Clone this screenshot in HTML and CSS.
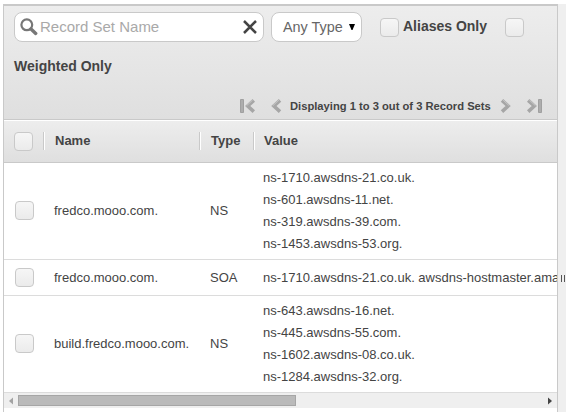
FILE: index.html
```html
<!DOCTYPE html>
<html lang="en">
<head>
<meta charset="utf-8">
<title>Record Sets</title>
<link rel="stylesheet" href="styles.css">
</head>
<body>
<div class="layout">
  <main class="panel">
    <header class="toolbar">
      <div class="filters">
        <div class="search">
          <svg class="search-icon" width="18" height="18" viewBox="0 0 18 18"><circle cx="6.8" cy="6.8" r="5.4" fill="none" stroke="#777" stroke-width="2.2"/><path d="M11 11l4.7 4.4" stroke="#777" stroke-width="3.4" stroke-linecap="round"/></svg>
          <span class="placeholder">Record Set Name</span>
          <svg class="clear" width="14" height="14" viewBox="0 0 14 14"><path d="M1 1l12 12M13 1L1 13" stroke="#444" stroke-width="2.5"/></svg>
        </div>
        <div class="select"><span>Any Type</span><svg width="6" height="6" viewBox="0 0 6 6"><path d="M0 0h6L3.5 6h-1z" fill="#000"/></svg></div>
        <span class="check first"></span>
        <span class="label">Aliases Only</span>
        <span class="check second"></span>
      </div>
      <div class="label weighted">Weighted Only</div>
      <nav class="pager">
        <svg width="16" height="14" viewBox="0 0 16 14"><path d="M.5.5h3v13h-3z" fill="#adadad" stroke="#a0a0a0"/><path d="M13.8 1.4L7.7 7l6.1 5.6" fill="none" stroke="#a6a6a6" stroke-width="3.6"/><path d="M12.7 1L6.5 6.8" stroke="#c8c8c8"/></svg>
        <svg class="prev" width="11" height="14" viewBox="0 0 11 14"><path d="M9 1.4L2.9 7L9 12.6" fill="none" stroke="#a6a6a6" stroke-width="3.6"/><path d="M7.9 1L1.7 6.8" stroke="#c8c8c8"/></svg>
        <span class="count">Displaying 1 to 3 out of 3 Record Sets</span>
        <svg class="next" width="11" height="14" viewBox="0 0 11 14"><path d="M2 1.4L8.1 7L2 12.6" fill="none" stroke="#a6a6a6" stroke-width="3.6"/><path d="M3.1 1L9.3 6.8" stroke="#c8c8c8"/></svg>
        <svg class="last" width="16" height="14" viewBox="0 0 16 14"><path d="M2.2 1.4L8.3 7l-6.1 5.6" fill="none" stroke="#a6a6a6" stroke-width="3.6"/><path d="M3.3 1L9.5 6.8" stroke="#c8c8c8"/><path d="M12.5.5h3v13h-3z" fill="#adadad" stroke="#a0a0a0"/></svg>
      </nav>
    </header>
    <div class="table">
      <div class="row head">
        <div class="cell"><span class="check"></span></div>
        <div class="cell split">Name</div>
        <div class="cell split">Type</div>
        <div class="cell split">Value</div>
      </div>
      <div class="row tall">
        <div class="cell"><span class="check"></span></div>
        <div class="cell">fredco.mooo.com.</div>
        <div class="cell">NS</div>
        <div class="cell value">ns-1710.awsdns-21.co.uk.<br>ns-601.awsdns-11.net.<br>ns-319.awsdns-39.com.<br>ns-1453.awsdns-53.org.</div>
      </div>
      <div class="row short">
        <div class="cell"><span class="check"></span></div>
        <div class="cell">fredco.mooo.com.</div>
        <div class="cell">SOA</div>
        <div class="cell value">ns-1710.awsdns-21.co.uk. awsdns-hostmaster.ama</div>
      </div>
      <div class="row tall">
        <div class="cell"><span class="check"></span></div>
        <div class="cell">build.fredco.mooo.com.</div>
        <div class="cell">NS</div>
        <div class="cell value">ns-643.awsdns-16.net.<br>ns-445.awsdns-55.com.<br>ns-1602.awsdns-08.co.uk.<br>ns-1284.awsdns-32.org.</div>
      </div>
    </div>
    <div class="scrollbar">
      <svg width="4" height="8" viewBox="0 0 4 8"><path d="M4 .5v7L0 4z" fill="#a3a3a3"/></svg>
      <div class="thumb"></div>
      <svg class="right" width="4" height="8" viewBox="0 0 4 8"><path d="M0 .5v7L4 4z" fill="#444"/></svg>
    </div>
  </main>
  <div class="splitter"><span class="grip"></span></div>
</div>
</body>
</html>
```

FILE: styles.css
```css
* { box-sizing: border-box; }
body {
  margin: 0;
  background: #fff;
  color: #444;
  font: 13px/22px "Liberation Sans", Arial, sans-serif;
  overflow: hidden;
}
svg { display: block; flex: none; }
.layout { display: flex; height: 412px; padding: 4px 0 0 3px; }
.panel {
  flex: none;
  width: 555px;
  border: solid #c9c9c9;
  border-width: 2px 1px 0;
  overflow: hidden;
}
.toolbar {
  height: 114px;
  padding: 6px 10px 0;
  border-bottom: 1px solid #c9c9c9;
  background: linear-gradient(#ededed, #dfdfdf);
}
.filters { display: flex; height: 30px; }
.search, .select {
  display: flex;
  align-items: center;
  height: 30px;
  border: 1px solid #c9c9c9;
  border-radius: 8px;
  background: #fff;
}
.search { width: 250px; padding: 0 6px 0 5px; }
.search-icon { margin-top: -1px; }
.placeholder { margin-left: 2px; font-size: 15px; color: #a9a9a9; }
.clear { margin: -1px 0 0 auto; }
.select {
  width: 91px;
  margin-left: 7px;
  padding: 0 6px 0 11px;
  justify-content: space-between;
  font-size: 14.4px;
  color: #666;
}
.check {
  flex: none;
  width: 19px;
  height: 19px;
  border: 1px solid #c9c9c9;
  border-radius: 4px;
  background: linear-gradient(#f6f6f6, #ebebeb);
}
.first { margin: 6px 4px 0 18px; }
.second { margin: 6px 0 0 18px; }
.label { font-size: 14px; font-weight: bold; line-height: 28px; }
.weighted { margin-top: 10px; }
.pager { display: flex; align-items: center; height: 14px; margin: 19px 0 0 226px; }
.prev { margin-left: 15px; }
.count { width: 202px; margin-left: 8px; font-size: 11.2px; font-weight: bold; white-space: nowrap; }
.next { margin-left: 8px; }
.last { margin-left: 15px; }
.row {
  display: grid;
  grid-template-columns: 39px 156px 54px 304px;
  align-items: center;
  border-bottom: 1px solid #dcdcdc;
}
.cell { padding-left: 11px; white-space: nowrap; }
.value { padding-left: 10px; overflow: hidden; }
.tall { height: 97px; }
.short { height: 36px; }
.head {
  height: 43px;
  padding-bottom: 1px;
  border-top: 1px solid #fff;
  border-bottom-color: #c9c9c9;
  background: linear-gradient(#ededed, #dfdfdf);
  font-weight: bold;
}
.head .cell:first-child { padding-left: 10px; }
.head .cell:last-child { padding-left: 10px; }
.cell .check { display: block; }
.tall .check { margin-bottom: 1px; }
.split {
  height: 18px;
  line-height: 18px;
  border-left: 1px solid #c9c9c9;
  box-shadow: inset 1px 0 #fff;
}
.scrollbar {
  display: flex;
  align-items: center;
  height: 15px;
  padding: 0 5px;
  background: #efefef;
}
.thumb {
  width: 278px;
  height: 11px;
  margin-left: 5px;
  border: 1px solid #a6a6a6;
  background: #bababa;
}
.right { margin-left: auto; }
.splitter { width: 8px; padding: 271px 0 0 3px; background: #efefef; }
.grip {
  display: block;
  width: 4px;
  height: 7px;
  border: solid #555;
  border-width: 0 1px;
}
```
